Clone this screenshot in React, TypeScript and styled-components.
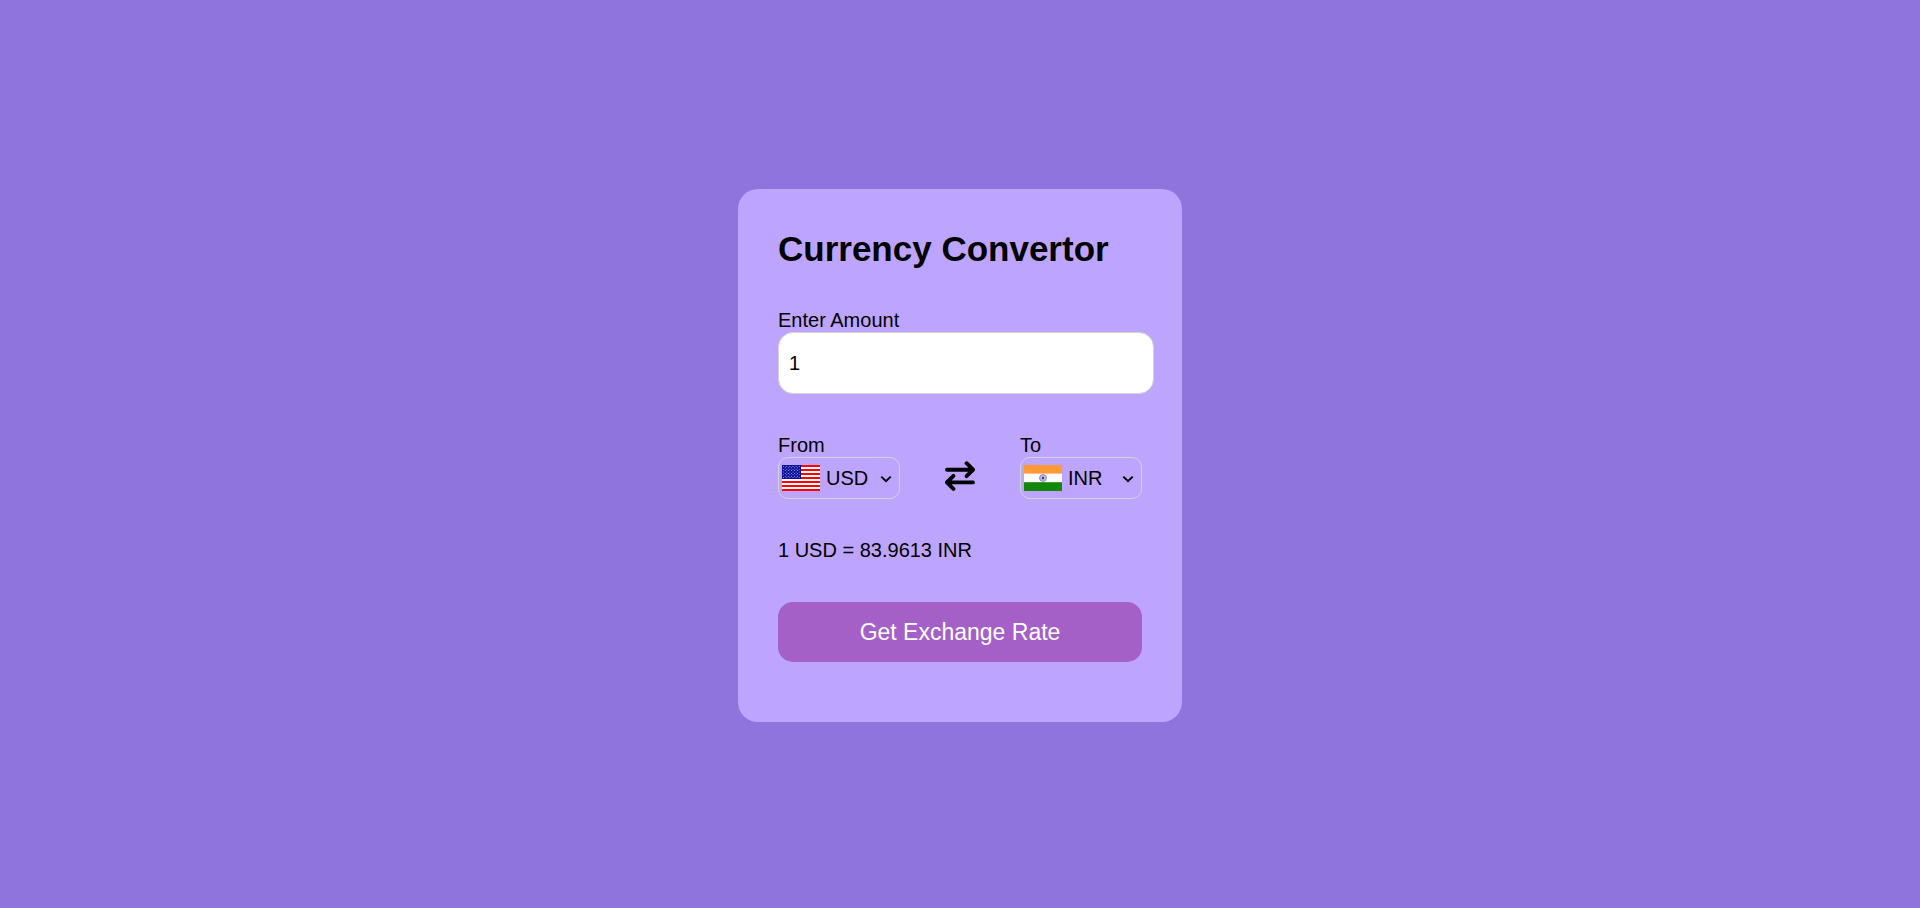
import React, { useState } from 'react';
import styled, { createGlobalStyle } from 'styled-components';

const GlobalStyle = createGlobalStyle`
  * {
    margin: 0;
    padding: 0;
  }

  body {
    background-color: #9074dd;
    color: #000;
    font-family: Arial, 'Liberation Sans', sans-serif;
  }
`;

const Page = styled.main`
  box-sizing: border-box;
  min-height: 100vh;
  padding-top: 3px;
  display: flex;
  align-items: center;
  justify-content: center;
`;

const Card = styled.section`
  width: 364px;
  padding: 40px 40px 60px;
  border-radius: 20px;
  background-color: #bda5ff;
`;

const Title = styled.h1`
  font-size: 35px;
  line-height: 40px;
`;

const Form = styled.form`
  display: flex;
  flex-direction: column;
  gap: 40px;
  margin-top: 40px;
`;

const Field = styled.div`
  display: flex;
  flex-direction: column;
  align-items: flex-start;
`;

const Label = styled.label`
  font-size: 20px;
  line-height: 23px;
`;

const AmountInput = styled.input`
  width: 100%;
  height: 60px;
  padding-left: 10px;
  border: 1px solid lightgray;
  border-radius: 15px;
  outline: none;
  background-color: #fff;
  color: #000;
  font-family: inherit;
  font-size: 20px;
`;

const Row = styled.div`
  display: flex;
  justify-content: space-between;
`;

const SelectBox = styled.div`
  position: relative;
  display: flex;
  align-items: center;
  width: 114px;
  height: 40px;
  padding: 0 3px;
  border: 1px solid lightgray;
  border-radius: 10px;

  svg {
    flex: none;
  }
`;

const Select = styled.select`
  flex: 1;
  min-width: 0;
  padding-left: 6px;
  appearance: none;
  border: none;
  outline: none;
  background: transparent;
  color: #000;
  font-family: inherit;
  font-size: 20px;
  cursor: pointer;
`;

const Chevron = styled.svg`
  position: absolute;
  right: 7px;
  top: 17px;
  pointer-events: none;
`;

const SwapButton = styled.button`
  display: flex;
  align-self: flex-start;
  margin-top: 27px;
  border: none;
  background: none;
  cursor: pointer;
`;

const Result = styled.output`
  font-size: 20px;
  line-height: 23px;
`;

const SubmitButton = styled.button`
  width: 100%;
  height: 60px;
  border: none;
  border-radius: 15px;
  background-color: #a560c8;
  color: #fff;
  font-family: inherit;
  font-size: 23px;
  cursor: pointer;
`;

const stripes = [0, 2, 4, 6, 8, 10, 12];
const starRows = [0, 1, 2, 3, 4, 5, 6, 7, 8];

const UsFlag = () => (
  <svg width="38" height="26" viewBox="0 0 38 26" aria-hidden="true">
    <rect width="38" height="26" fill="#fff" />
    {stripes.map((n) => (
      <rect key={n} y={n * 2} width="38" height="2" fill="#f00" />
    ))}
    <rect width="19" height="14" fill="#0a0a9c" />
    {starRows.map((r) =>
      Array.from({ length: r % 2 ? 5 : 6 }, (_, c) => (
        <circle key={`${r}-${c}`} cx={1.7 + c * 3.1 + (r % 2 ? 1.55 : 0)} cy={1.4 + r * 1.4} r="0.5" fill="#c4c4ee" />
      )),
    )}
  </svg>
);

const IndiaFlag = () => (
  <svg width="38" height="26" viewBox="0 0 38 26" aria-hidden="true">
    <rect width="38" height="26" fill="#fff" />
    <rect width="38" height="8.6" fill="#ff9933" />
    <rect y="17.2" width="38" height="8.8" fill="#138808" />
    <circle cx="19" cy="13" r="3.4" fill="#d5d5ec" stroke="#7474b8" strokeWidth="0.9" />
    {[0, 45, 90, 135].map((a) => (
      <path key={a} d="M19 10v6" stroke="#8c8cc8" strokeWidth="0.4" transform={`rotate(${a} 19 13)`} />
    ))}
    <circle cx="19" cy="13" r="1.2" fill="#34349a" />
  </svg>
);

const SwapIcon = () => (
  <svg
    width="30"
    height="30"
    viewBox="0 0 30 30"
    fill="none"
    stroke="#000"
    strokeWidth="3.9"
    strokeLinecap="round"
    strokeLinejoin="round"
    aria-hidden="true"
  >
    <path d="M2 8.7H28M21.6 2.2l6.5 6.5-6.5 6.5" />
    <path d="M28 21.4H2M8.4 14.9l-6.5 6.5 6.5 6.5" />
  </svg>
);

type Currency = 'USD' | 'INR';

const currencies: Currency[] = ['USD', 'INR'];
const inrPerUsd = 83.9613;

const rateOf = (from: Currency, to: Currency) => {
  if (from === to) return 1;
  return from === 'USD' ? inrPerUsd : 1 / inrPerUsd;
};

type PickerProps = {
  id: string;
  label: string;
  value: Currency;
  onChange: (value: Currency) => void;
};

const CurrencyPicker = ({ id, label, value, onChange }: PickerProps) => (
  <Field>
    <Label htmlFor={id}>{label}</Label>
    <SelectBox>
      {value === 'USD' ? <UsFlag /> : <IndiaFlag />}
      <Select id={id} value={value} onChange={(e) => onChange(e.target.value as Currency)}>
        {currencies.map((code) => (
          <option key={code} value={code}>
            {code}
          </option>
        ))}
      </Select>
      <Chevron width="12" height="8" viewBox="0 0 12 8" aria-hidden="true">
        <path d="M1.3 1.6L6 6.2l4.7-4.6" fill="none" stroke="#000" strokeWidth="2" />
      </Chevron>
    </SelectBox>
  </Field>
);

export default function App() {
  const [amount, setAmount] = useState('1');
  const [from, setFrom] = useState<Currency>('USD');
  const [to, setTo] = useState<Currency>('INR');
  const describe = () => `${amount} ${from} = ${+(Number(amount) * rateOf(from, to)).toFixed(4)} ${to}`;
  const [result, setResult] = useState(describe);

  const swap = () => {
    setFrom(to);
    setTo(from);
  };

  return (
    <Page>
      <GlobalStyle />
      <Card>
        <Title>Currency Convertor</Title>
        <Form
          onSubmit={(e) => {
            e.preventDefault();
            setResult(describe());
          }}
        >
          <Field>
            <Label htmlFor="amount">Enter Amount</Label>
            <AmountInput id="amount" type="text" value={amount} onChange={(e) => setAmount(e.target.value)} />
          </Field>
          <Row>
            <CurrencyPicker id="from" label="From" value={from} onChange={setFrom} />
            <SwapButton type="button" aria-label="Swap currencies" onClick={swap}>
              <SwapIcon />
            </SwapButton>
            <CurrencyPicker id="to" label="To" value={to} onChange={setTo} />
          </Row>
          <Result htmlFor="amount from to">{result}</Result>
          <SubmitButton type="submit">Get Exchange Rate</SubmitButton>
        </Form>
      </Card>
    </Page>
  );
}
